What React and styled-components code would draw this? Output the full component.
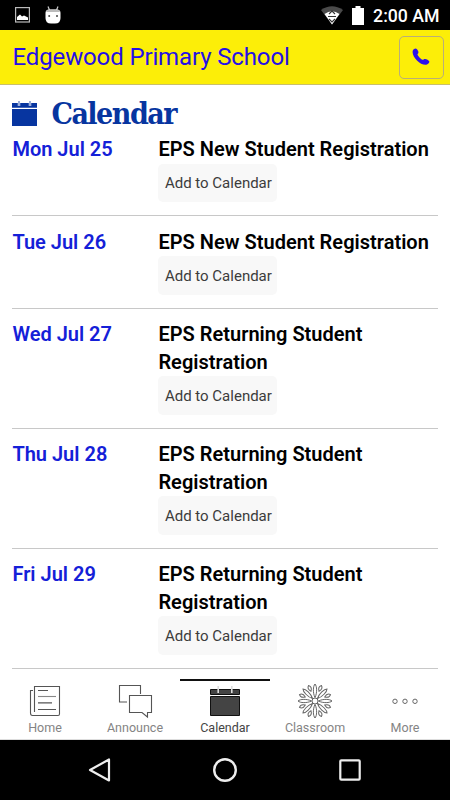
import React from 'react';
import styled, { createGlobalStyle } from 'styled-components';

const GlobalStyle = createGlobalStyle`
  * {
    box-sizing: border-box;
  }

  body {
    margin: 0;
    background: #fff;
    font-family: Roboto, sans-serif;
  }

  svg {
    display: block;
    flex-shrink: 0;
  }
`;

const Screen = styled.div`
  display: flex;
  flex-direction: column;
  width: 450px;
  height: 800px;
  overflow: hidden;
  background: #fff;
`;

const StatusBar = styled.div`
  display: flex;
  justify-content: space-between;
  height: 30px;
  flex-shrink: 0;
  padding: 0 10.5px 0 15px;
  background: #000;
`;

const StatusGroup = styled.div`
  display: flex;
  align-items: center;
  gap: ${({ gap }) => gap};
`;

const Clock = styled.span`
  color: #fff;
  font-size: 17.7px;
  font-weight: 500;
  line-height: 30px;
  padding-top: 2px;
  white-space: nowrap;
`;

const Header = styled.header`
  display: flex;
  align-items: center;
  justify-content: space-between;
  height: 55px;
  flex-shrink: 0;
  padding: 0 6px 0 12.5px;
  background: #fcee08;
  border-bottom: 1px solid #c9bf6c;
`;

const SchoolName = styled.h1`
  margin: 0;
  color: #2510e6;
  font-size: 24px;
  font-weight: 400;
  line-height: 30px;
  letter-spacing: -0.13px;
  white-space: nowrap;
`;

const CallButton = styled.button`
  display: flex;
  align-items: center;
  justify-content: center;
  width: 45px;
  height: 43px;
  margin-top: 1px;
  padding: 0 1px 2px 0;
  background: none;
  border: 1px solid #b9ae79;
  border-radius: 5px;
`;

const Content = styled.main`
  flex: 1;
  padding: 0 12.5px 0 12.4px;
  overflow: hidden;
`;

const Heading = styled.div`
  display: flex;
  align-items: center;
  gap: 14px;
  height: 51.4px;
  padding-top: 5px;
`;

const HeadingText = styled.h2`
  margin: 0;
  color: #0735a0;
  font-family: 'DejaVu Serif Condensed', 'DejaVu Serif', serif;
  font-size: 30px;
  font-stretch: condensed;
  font-weight: 700;
  line-height: 36px;
  letter-spacing: -1.5px;
  padding-top: 1px;
`;

const Event = styled.section`
  display: grid;
  grid-template-columns: 146px 1fr;
  padding: 12.5px 0 13px;
  border-bottom: 1px solid #c8c8c8;

  &:first-of-type {
    padding-top: 0;
  }
`;

const EventDate = styled.div`
  color: #1420d8;
  font-size: 20px;
  font-weight: 600;
  line-height: 27.5px;
`;

const EventTitle = styled.div`
  font-size: 20px;
  font-weight: 600;
  line-height: 27.5px;
  letter-spacing: 0.02px;
  color: #000;
`;

const AddButton = styled.button`
  display: block;
  width: 119px;
  height: 38.5px;
  padding: 0 0 0 1px;
  color: #3c3c3c;
  background: #f8f8f8;
  border: 0;
  border-radius: 5px;
  font-family: inherit;
  font-size: 15px;
  white-space: nowrap;
`;

const TabBar = styled.nav`
  display: grid;
  grid-template-columns: repeat(5, 1fr);
  height: 61px;
  flex-shrink: 0;
  border-bottom: 1px solid #ddd;
`;

const Tab = styled.div`
  display: flex;
  flex-direction: column;
  align-items: center;
  border-top: 2px solid ${({ $active }) => ($active ? '#111' : 'transparent')};
  padding-top: 2px;
`;

const TabLabel = styled.span`
  color: ${({ $active }) => ($active ? '#444' : '#848484')};
  font-size: 12.5px;
  line-height: 16px;
  margin-top: 1px;
`;

const NavBar = styled.div`
  display: flex;
  justify-content: center;
  align-items: center;
  gap: 89px;
  height: 60px;
  flex-shrink: 0;
  background: #000;
`;

const PictureIcon = () => (
  <svg width="15" height="16" viewBox="0 0 15 16">
    <rect x=".6" y=".6" width="13.8" height="14.4" fill="#000" stroke="#bbb" strokeWidth="1.2" />
    <path d="M2 13V10L5 7.5L7 9.5L9 8.5L13 10.5V13Z" fill="#fff" />
  </svg>
);

const RobotIcon = () => (
  <svg width="16" height="18" viewBox="0 0 16 18">
    <path d="M3 .5L4.5 4M13 .5L11.5 4" stroke="#ccc" strokeWidth="1.2" />
    <path d="M.5 7Q.5 3.5 4 3.5H12Q15.5 3.5 15.5 7V12Q15.5 17.5 10 17.5H6Q.5 17.5 .5 12Z" fill="#fff" />
    <path d="M1 6Q1.5 3.5 4 3.5H12Q14.5 3.5 15 6Z" fill="#bbb" />
    <circle cx="4.2" cy="10" r="1" fill="#444" />
    <circle cx="12" cy="10" r="1" fill="#444" />
  </svg>
);

const WifiIcon = () => (
  <svg width="22" height="19" viewBox="0 0 22 19">
    <path d="M0 4Q11-3.5 22 4L11 18.5Z" fill="#4a4a4a" />
    <path d="M3.5 8Q11 2.5 18.5 8L11 18.5Z" fill="#fff" />
    <path d="M8 8L11 5L14 8M8 13L11 16L14 13M7 10.5H15" fill="none" stroke="#333" strokeWidth="1.1" />
  </svg>
);

const BatteryIcon = () => (
  <svg width="12" height="19" viewBox="0 0 12 19">
    <path d="M0 2H3.5V0H8.5V2H12V19H0Z" fill="#fff" />
  </svg>
);

const PhoneIcon = () => (
  <svg width="18" height="18" viewBox="0 0 18 18">
    <path
      d="M2.1 1.1C3.6-.1 5.2.5 6.3 3.5C6.9 5.2 5.6 5.9 5.5 6.5C5.4 7.5 9.1 11.5 10.5 11.8C11.3 12 11.9 10.9 13.2 11.1C14.8 11.4 16.5 12.3 17.2 13.3C17.8 14.5 16.2 16.5 14.3 16.8C8.5 17.5 .7 9.6 .6 4.2C.6 2.6 1.2 1.8 2.1 1.1Z"
      fill="#2c10ed"
    />
  </svg>
);

const HeadingIcon = () => (
  <svg width="25" height="25" viewBox="0 0 25 25">
    <path d="M0 2H25V6.7H0ZM0 8H25V25H0Z" fill="#0735a0" />
    <path d="M7 0V5M18 0V5" stroke="#fff" strokeWidth="2.4" />
    <path d="M7 0V5M18 0V5" stroke="#0735a0" strokeWidth=".8" />
  </svg>
);

const NewsIcon = () => (
  <svg width="36" height="36" viewBox="0 0 36 36" fill="none" stroke="#555" strokeWidth="1.1">
    <path d="M7.5 29V3.5H32.5V31Q32.5 32.5 31 32.5H5.5Q3.5 32.5 3.5 30V7.5H6" />
    <path d="M11 7.5H21M11 19.9H25M11 26.5H29" />
    <path d="M11 13.5H29" stroke="#888" />
  </svg>
);

const ChatIcon = () => (
  <svg width="36" height="36" viewBox="0 0 36 36" fill="none" stroke="#555" strokeWidth="1.1">
    <path d="M10 19H2.5V2.5H23.5V11" />
    <path d="M12.5 12.5H34.5V29.5H30.5V34L25 29.5H12.5Z" />
  </svg>
);

const CalendarIcon = () => (
  <svg width="36" height="36" viewBox="0 0 36 36">
    <path d="M3.5 6.5H32.5V11.5H3.5ZM3.5 13.5H32.5V32.5H3.5Z" fill="#444" stroke="#111" />
    <path d="M11.2 3V10M24.8 3V10" stroke="#ddd" strokeWidth="1.6" />
  </svg>
);

const petals = Array.from({ length: 16 }, (_, i) => i * 22.5);

const FlowerIcon = () => (
  <svg width="36" height="36" viewBox="0 0 36 36" fill="none" stroke="#666" strokeWidth="1">
    <circle cx="18" cy="18" r="3" />
    {petals.map((angle, i) => (
      <path
        key={angle}
        d={i % 2 ? 'M18 7.5C16 5 16.4 2.5 18 1.2C19.6 2.5 20 5 18 7.5Z' : 'M18 14.5C15.7 10 16 3 18 1C20 3 20.3 10 18 14.5Z'}
        transform={`rotate(${angle} 18 18)`}
      />
    ))}
  </svg>
);

const MoreIcon = () => (
  <svg width="36" height="36" viewBox="0 0 36 36" fill="none" stroke="#666" strokeWidth="1">
    <circle cx="8" cy="18.3" r="2.2" />
    <circle cx="18" cy="18.3" r="2.2" />
    <circle cx="28" cy="18.3" r="2.2" />
  </svg>
);

const events = [
  { date: 'Mon Jul 25', title: 'EPS New Student Registration' },
  { date: 'Tue Jul 26', title: 'EPS New Student Registration' },
  { date: 'Wed Jul 27', title: 'EPS Returning Student Registration' },
  { date: 'Thu Jul 28', title: 'EPS Returning Student Registration' },
  { date: 'Fri Jul 29', title: 'EPS Returning Student Registration' },
];

const tabs = [
  { label: 'Home', Icon: NewsIcon },
  { label: 'Announce', Icon: ChatIcon },
  { label: 'Calendar', Icon: CalendarIcon, active: true },
  { label: 'Classroom', Icon: FlowerIcon },
  { label: 'More', Icon: MoreIcon },
];

const App = () => (
  <>
    <GlobalStyle />
    <Screen>
      <StatusBar>
        <StatusGroup gap="15px">
          <PictureIcon />
          <RobotIcon />
        </StatusGroup>
        <StatusGroup gap="9px">
          <WifiIcon />
          <BatteryIcon />
          <Clock>2:00 AM</Clock>
        </StatusGroup>
      </StatusBar>
      <Header>
        <SchoolName>Edgewood Primary School</SchoolName>
        <CallButton aria-label="Call">
          <PhoneIcon />
        </CallButton>
      </Header>
      <Content>
        <Heading>
          <HeadingIcon />
          <HeadingText>Calendar</HeadingText>
        </Heading>
        {events.map(({ date, title }) => (
          <Event key={date}>
            <EventDate>{date}</EventDate>
            <div>
              <EventTitle>{title}</EventTitle>
              <AddButton>Add to Calendar</AddButton>
            </div>
          </Event>
        ))}
      </Content>
      <TabBar>
        {tabs.map(({ label, Icon, active }) => (
          <Tab key={label} $active={active}>
            <Icon />
            <TabLabel $active={active}>{label}</TabLabel>
          </Tab>
        ))}
      </TabBar>
      <NavBar>
        <svg width="36" height="36" viewBox="0 0 36 36">
          <path d="M27 7.5V28.5L8 18Z" fill="none" stroke="#eee" strokeWidth="2.2" strokeLinejoin="round" />
        </svg>
        <svg width="36" height="36" viewBox="0 0 36 36">
          <circle cx="18" cy="18" r="10.8" fill="none" stroke="#eee" strokeWidth="2.4" />
        </svg>
        <svg width="36" height="36" viewBox="0 0 36 36">
          <rect x="8.3" y="8.3" width="19.4" height="19.4" rx="1" fill="none" stroke="#eee" strokeWidth="2.2" />
        </svg>
      </NavBar>
    </Screen>
  </>
);

export default App;
